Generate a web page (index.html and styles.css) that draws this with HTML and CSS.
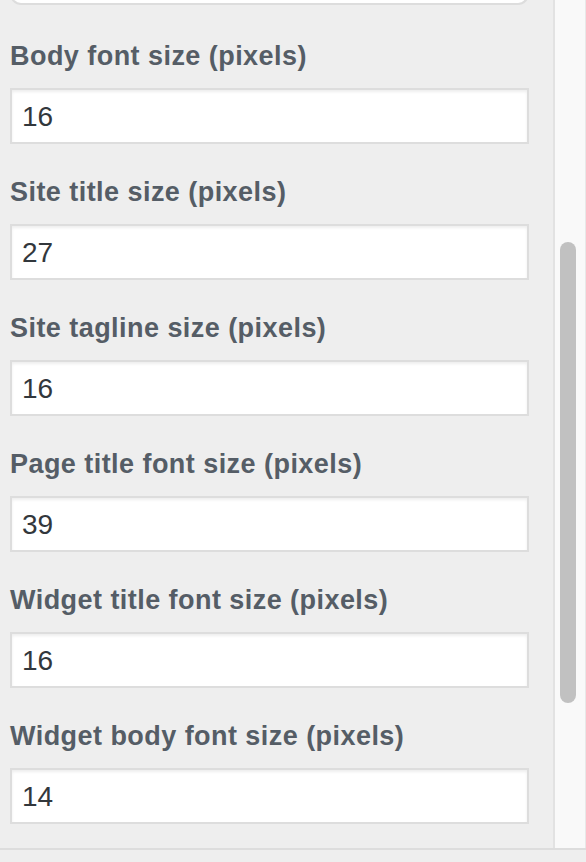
FILE: index.html
```html
<!DOCTYPE html>
<html>
<head>
<meta charset="utf-8">
<link rel="stylesheet" href="styles.css">
</head>
<body>
<div class="frame">
  <div class="main">
    <div class="panel">
      <div class="prev-box"></div>
      <div class="controls">
        <div class="control">
          <label class="title">Body font size (pixels)</label>
          <div class="field">16</div>
        </div>
        <div class="control">
          <label class="title">Site title size (pixels)</label>
          <div class="field">27</div>
        </div>
        <div class="control">
          <label class="title">Site tagline size (pixels)</label>
          <div class="field">16</div>
        </div>
        <div class="control">
          <label class="title">Page title font size (pixels)</label>
          <div class="field">39</div>
        </div>
        <div class="control">
          <label class="title">Widget title font size (pixels)</label>
          <div class="field">16</div>
        </div>
        <div class="control">
          <label class="title">Widget body font size (pixels)</label>
          <div class="field">14</div>
        </div>
      </div>
    </div>
    <div class="scrolltrack">
      <div class="thumb"></div>
    </div>
  </div>
  <div class="footer"></div>
</div>
</body>
</html>
```

FILE: styles.css
```css
html, body {
  margin: 0;
  padding: 0;
  background: #eeeeee;
}
.frame {
  width: 586px;
  height: 862px;
  display: flex;
  flex-direction: column;
  overflow: hidden;
}
.main {
  height: 848px;
  display: flex;
  flex-direction: row;
  overflow: hidden;
}
.panel {
  padding: 0 24px 0 10px;
  border-right: 2px solid #e2e2e2;
  box-sizing: content-box;
  width: 520px;
}
.prev-box {
  background: #ffffff;
  border: 2px solid #dddddd;
  border-top: none;
  border-radius: 0 0 12px 12px;
  margin-top: -6px;
  height: 9px;
}
.controls {
  padding-top: 35px;
  display: flex;
  flex-direction: column;
  gap: 32px;
}
.control {
  display: flex;
  flex-direction: column;
  gap: 16px;
}
.title {
  display: block;
  font-family: "Liberation Sans", Arial, sans-serif;
  font-weight: bold;
  font-size: 27px;
  line-height: 32px;
  color: #555d66;
  letter-spacing: 0.45px;
  white-space: nowrap;
}
.field {
  height: 51px;
  padding-top: 1px;
  border: 2px solid #dddddd;
  background: #ffffff;
  box-shadow: inset 0 2px 3px rgba(0,0,0,0.07);
  font-family: "Liberation Sans", Arial, sans-serif;
  font-size: 28px;
  line-height: 52px;
  color: #32373c;
  padding-left: 10px;
}
.scrolltrack {
  width: 25px;
  background: #f9f9f9;
  border-right: 1px solid #e8e8e8;
  padding-top: 242px;
  padding-left: 5px;
}
.thumb {
  width: 16px;
  height: 461px;
  background: #c1c1c1;
  border-radius: 8px;
}
.footer {
  flex: 1;
  border-top: 2px solid #dddddd;
  background: #eeeeee;
}
```
